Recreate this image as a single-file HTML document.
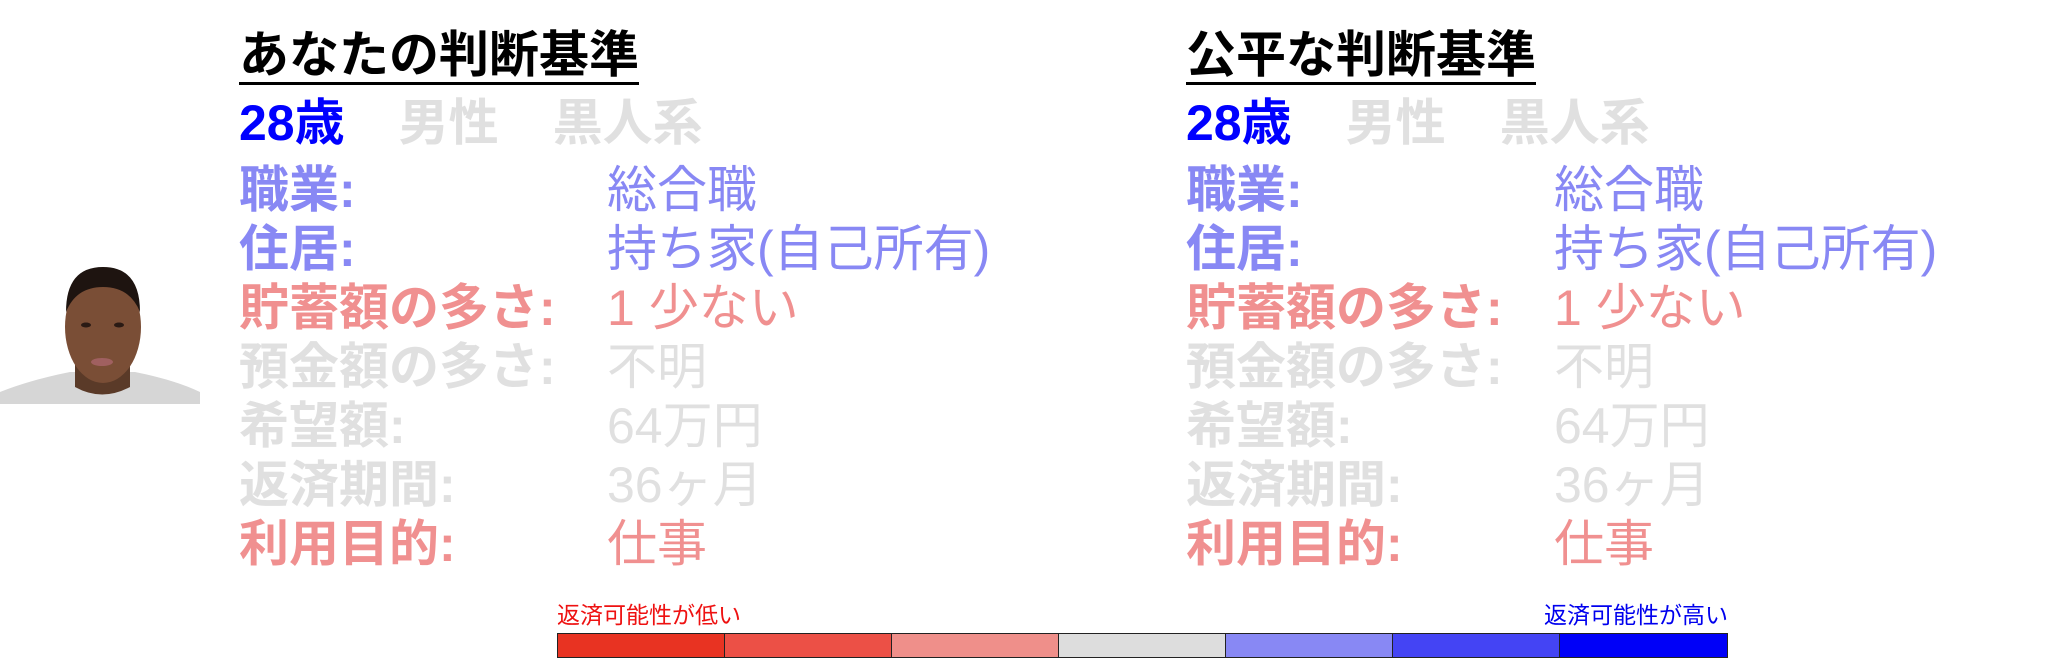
<!DOCTYPE html>
<html><head><meta charset="utf-8"><style>
body{margin:0;width:2048px;height:666px;background:#fff;position:relative;overflow:hidden;font-family:"Liberation Sans","Noto Sans CJK JP",sans-serif}
.t{position:absolute;white-space:nowrap;line-height:1}
.h{font-size:50px;font-weight:bold;color:#000;border-bottom:3px solid #000;padding-bottom:2px}
.l{font-size:50px;font-weight:bold}
.v{font-size:50px;font-weight:normal}
.b{color:#0000ff}.g{color:#e0e0e0}.lb{color:#8888f4}.p{color:#f09090}
.bar{position:absolute;top:633px;height:25px;border:1px solid #222;box-sizing:border-box}
</style></head><body>
<svg style="position:absolute;left:0;top:262px" width="205" height="145">
<path d="M0 142 L0 130 Q30 118 70 110 L135 110 Q175 118 200 130 L200 142 Z" fill="#d6d6d6"/>
<path d="M75 95 L75 125 Q102 140 130 125 L130 95 Z" fill="#5a3a28"/>
<ellipse cx="103" cy="65" rx="38" ry="56" fill="#7a4e36"/>
<path d="M66 50 Q66 5 103 5 Q140 5 140 50 Q130 25 103 25 Q76 25 66 50Z" fill="#1e1410"/>
<ellipse cx="86" cy="63" rx="5" ry="2.5" fill="#2a1a14"/><ellipse cx="119" cy="63" rx="5" ry="2.5" fill="#2a1a14"/>
<ellipse cx="102" cy="100" rx="11" ry="4" fill="#a06060"/>
</svg>
<div class="t h" style="left:239px;top:30px">あなたの判断基準</div>
<div class="t h" style="left:1186px;top:30px">公平な判断基準</div>

<div class="t l" style="left:239px;top:98px"><span class="b">28歳</span><span class="g" style="margin-left:54px">男性</span><span class="g" style="margin-left:54px">黒人系</span></div>
<div class="t l" style="left:1186px;top:98px"><span class="b">28歳</span><span class="g" style="margin-left:54px">男性</span><span class="g" style="margin-left:54px">黒人系</span></div>

<div class="t l lb" style="left:239px;top:165px">職業:</div><div class="t v lb" style="left:607px;top:165px">総合職</div>
<div class="t l lb" style="left:239px;top:224px">住居:</div><div class="t v lb" style="left:607px;top:224px">持ち家(自己所有)</div>
<div class="t l p" style="left:239px;top:283px">貯蓄額の多さ:</div><div class="t v p" style="left:607px;top:283px">1 少ない</div>
<div class="t l g" style="left:239px;top:342px">預金額の多さ:</div><div class="t v g" style="left:607px;top:342px">不明</div>
<div class="t l g" style="left:239px;top:401px">希望額:</div><div class="t v g" style="left:607px;top:401px">64万円</div>
<div class="t l g" style="left:239px;top:460px">返済期間:</div><div class="t v g" style="left:607px;top:460px">36ヶ月</div>
<div class="t l p" style="left:239px;top:519px">利用目的:</div><div class="t v p" style="left:607px;top:519px">仕事</div>

<div class="t l lb" style="left:1186px;top:165px">職業:</div><div class="t v lb" style="left:1554px;top:165px">総合職</div>
<div class="t l lb" style="left:1186px;top:224px">住居:</div><div class="t v lb" style="left:1554px;top:224px">持ち家(自己所有)</div>
<div class="t l p" style="left:1186px;top:283px">貯蓄額の多さ:</div><div class="t v p" style="left:1554px;top:283px">1 少ない</div>
<div class="t l g" style="left:1186px;top:342px">預金額の多さ:</div><div class="t v g" style="left:1554px;top:342px">不明</div>
<div class="t l g" style="left:1186px;top:401px">希望額:</div><div class="t v g" style="left:1554px;top:401px">64万円</div>
<div class="t l g" style="left:1186px;top:460px">返済期間:</div><div class="t v g" style="left:1554px;top:460px">36ヶ月</div>
<div class="t l p" style="left:1186px;top:519px">利用目的:</div><div class="t v p" style="left:1554px;top:519px">仕事</div>

<div class="t" style="left:557px;top:604px;font-size:23px;color:#ee1111">返済可能性が低い</div>
<div class="t" style="right:320px;top:604px;font-size:23px;color:#0000ee">返済可能性が高い</div>
<div class="bar" style="left:557px;width:168px;background:#e83322"></div>
<div class="bar" style="left:724px;width:168px;background:#ec5046"></div>
<div class="bar" style="left:891px;width:168px;background:#ef8f8a"></div>
<div class="bar" style="left:1058px;width:168px;background:#dddddd"></div>
<div class="bar" style="left:1225px;width:168px;background:#8888f4"></div>
<div class="bar" style="left:1392px;width:168px;background:#4444f4"></div>
<div class="bar" style="left:1559px;width:169px;background:#0000f8"></div>
</body></html>
